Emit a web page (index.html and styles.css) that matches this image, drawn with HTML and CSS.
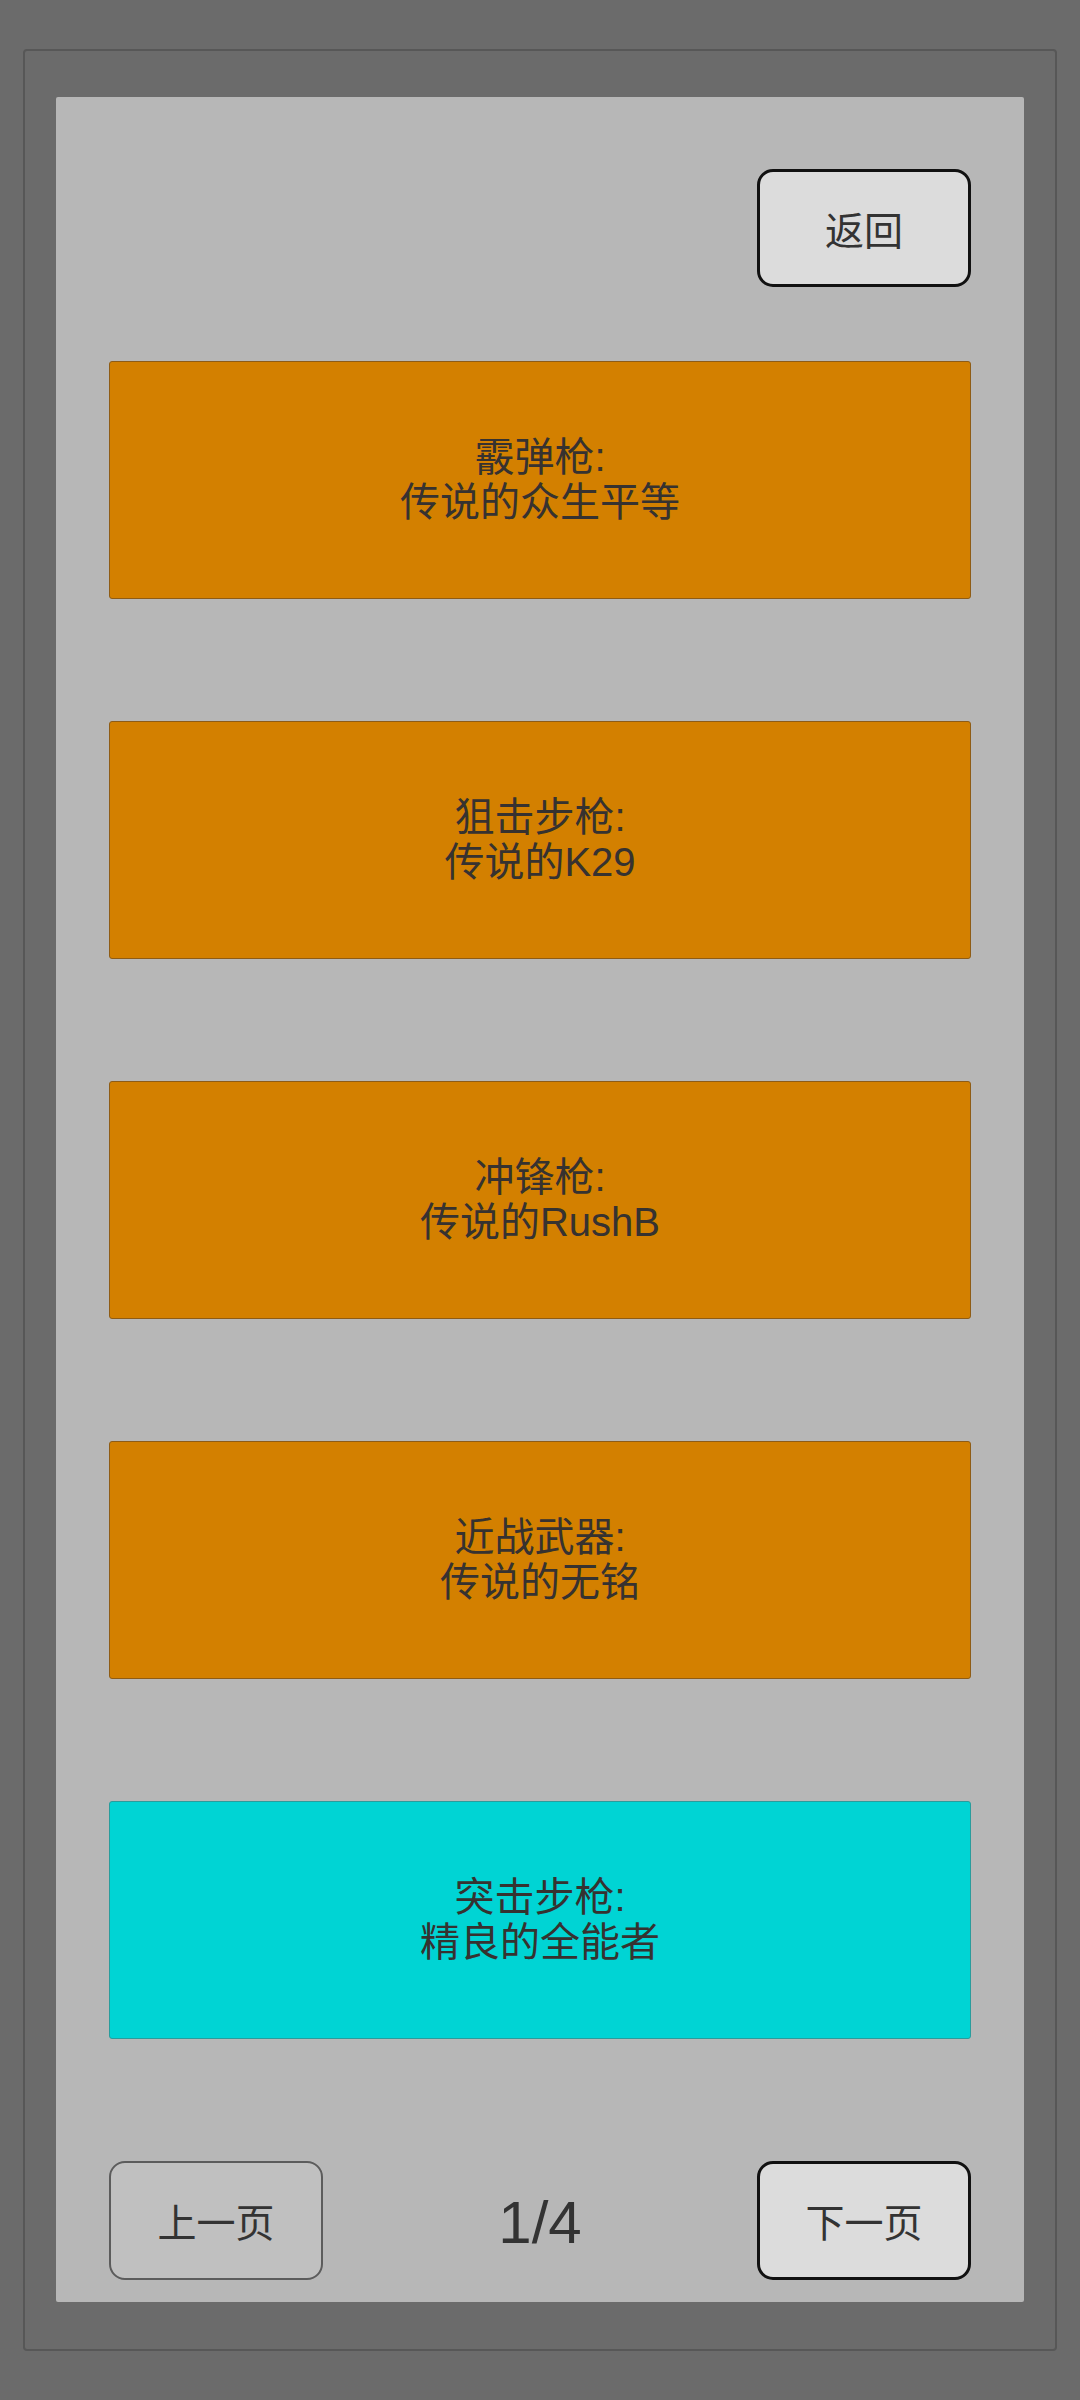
FILE: index.html
```html
<!DOCTYPE html>
<html lang="zh-CN">
<head>
<meta charset="utf-8">
<title>武器</title>
<link rel="stylesheet" href="styles.css">
</head>
<body>
<div class="frame">
  <div class="panel">
    <div class="top-row">
      <button class="btn btn-active">返回</button>
    </div>
    <div class="cards">
      <div class="card card-orange">霰弹枪:<br>传说的众生平等</div>
      <div class="card card-orange">狙击步枪:<br>传说的K29</div>
      <div class="card card-orange">冲锋枪:<br>传说的RushB</div>
      <div class="card card-orange">近战武器:<br>传说的无铭</div>
      <div class="card card-cyan">突击步枪:<br>精良的全能者</div>
    </div>
    <div class="bottom-row">
      <button class="btn btn-dim">上一页</button>
      <div class="page">1/4</div>
      <button class="btn btn-active">下一页</button>
    </div>
  </div>
</div>
</body>
</html>
```
FILE: styles.css
```css
* { box-sizing: border-box; }
html, body {
  margin: 0;
  padding: 0;
  background: #6b6b6b;
}
body {
  width: 1080px;
  height: 2400px;
  padding-top: 49px;
  padding-left: 23px;
  font-family: "Liberation Sans", "Noto Sans CJK SC", sans-serif;
  color: #333333;
}
.frame {
  width: 1034px;
  height: 2302px;
  border: 2px solid #575757;
  border-radius: 4px;
  padding: 46px 31px 0 31px;
}
.panel {
  width: 968px;
  height: 2205px;
  background: #b7b7b7;
  border-radius: 2px;
  padding: 72px 53px 0 53px;
  display: flex;
  flex-direction: column;
}
.top-row {
  display: flex;
  justify-content: flex-end;
  height: 118px;
}
.btn {
  width: 214px;
  height: 118px;
  border-radius: 16px;
  font-family: "Liberation Sans", "Noto Sans CJK SC", sans-serif;
  font-size: 39px;
  color: #333333;
  padding: 0;
  margin: 0;
}
.btn-active {
  background: #dcdcdc;
  border: 3px solid #111111;
}
.btn-dim {
  background: #c0c0c0;
  border: 2px solid #5c5c5c;
}
.cards {
  margin-top: 74px;
  display: flex;
  flex-direction: column;
  gap: 122.5px;
}
.card {
  height: 237.5px;
  border-radius: 3px;
  display: flex;
  align-items: center;
  justify-content: center;
  text-align: center;
  font-size: 40px;
  line-height: 45px;
  color: #363230;
}
.card-orange {
  background: #d38000;
  border: 1px solid #8e5c16;
}
.card-cyan {
  background: #00d4d4;
  border: 1px solid #2a9c9c;
}
.bottom-row {
  margin-top: 122px;
  height: 119px;
  display: flex;
  align-items: center;
  justify-content: space-between;
}
.bottom-row .btn { height: 119px; }
.page {
  font-size: 60px;
  color: #333333;
  padding-top: 4px;
}
```
